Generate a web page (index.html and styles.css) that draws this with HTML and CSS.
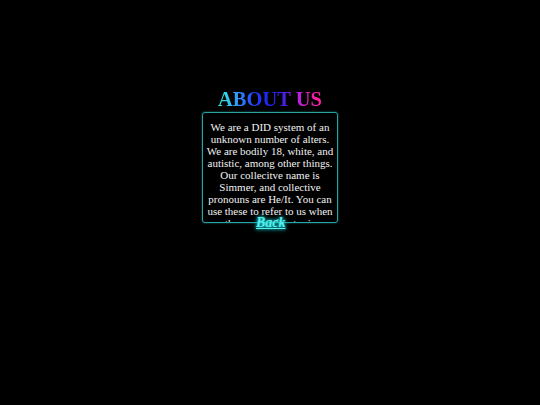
FILE: index.html
```html
<!DOCTYPE html>
<html>
<head>
<meta charset="utf-8">
<link rel="stylesheet" href="styles.css">
</head>
<body>
<main class="page">
  <section class="about">
    <h1 class="title">ABOUT US</h1>
    <div class="box">
      <p class="text">We are a DID system of an unknown number of alters. We are bodily 18, white, and autistic, among other things. Our collecitve name is Simmer, and collective pronouns are He/It. You can use these to refer to us when the current fronter is unknown.</p>
    </div>
    <a class="back" href="#">Back</a>
  </section>
</main>
</body>
</html>
```
FILE: styles.css
```css
html, body {
  margin: 0;
  padding: 0;
  background: #000;
  width: 540px;
  height: 405px;
  overflow: hidden;
}
.page {
  display: flex;
  justify-content: center;
  padding-top: 87px;
  font-family: "Liberation Serif", "Times New Roman", serif;
}
.about {
  position: relative;
  display: flex;
  flex-direction: column;
  align-items: center;
  width: 136px;
}
.title {
  margin: 0 0 1px;
  font-size: 20.5px;
  font-weight: bold;
  line-height: 24px;
  background: linear-gradient(90deg, #30e0e0 5%, #3090ff 20%, #2040ff 35%, #2020f0 50%, #5020e8 65%, #d020e0 80%, #ff20a0 95%);
  -webkit-background-clip: text;
  background-clip: text;
  color: transparent;
}
.box {
  box-sizing: border-box;
  width: 136px;
  height: 111px;
  border: 1px solid #2aa3a3;
  border-radius: 3px;
  box-shadow: 0 0 2px #1c7f7f;
  overflow: hidden;
  padding: 8px 2px 0;
}
.text {
  margin: 0;
  color: #f2f2f2;
  font-size: 11px;
  line-height: 12px;
  text-align: center;
}
.back {
  position: absolute;
  left: 54px;
  top: 128px;
  color: #55f0f0;
  font-size: 14px;
  font-weight: bold;
  font-style: italic;
  text-decoration: underline;
  text-shadow: 0 0 3px #1ad0d0, 0 0 5px #1ad0d0;
}
```
